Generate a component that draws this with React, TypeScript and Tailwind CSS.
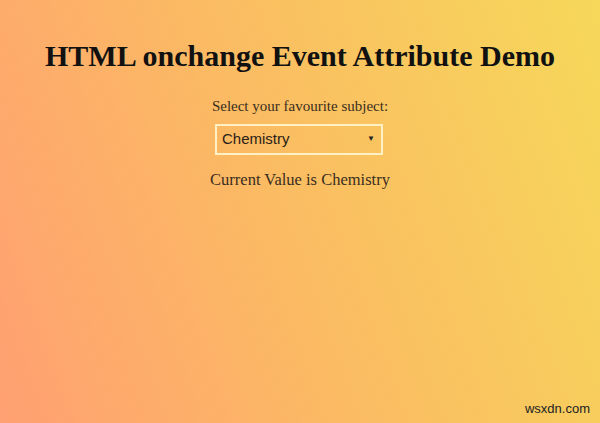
import React, { useState } from 'react';

const subjects = ['Physics', 'Chemistry', 'Mathematics', 'Biology'];

const App: React.FC = () => {
  const [value, setValue] = useState('Chemistry');

  return (
    <div className="relative w-[600px] h-[423px] overflow-hidden bg-[linear-gradient(70deg,#ffa072,#fbba63_45%,#f6d85a)] font-['Liberation_Serif',serif] text-[#2a2118]">
      {/* Heading */}
      <h1 className="pt-[38px] text-center text-[30px] leading-[36px] font-bold text-[#111]">
        HTML onchange Event Attribute Demo
      </h1>

      {/* Form */}
      <div className="flex flex-col items-center">
        <p className="mt-[22px] text-[15px] leading-[20px] text-[#3a2d20]">Select your favourite subject:</p>
        <div className="relative mt-[8px] ml-[-2px] w-[168px] h-[31px] border-2 border-[#fff1c4]">
          <select
            value={value}
            onChange={(e) => setValue(e.target.value)}
            className="w-full h-full appearance-none bg-transparent pl-[5px] font-['Liberation_Sans',sans-serif] text-[15px] text-[#2a2118] outline-none"
          >
            {subjects.map((s) => (
              <option key={s} value={s}>
                {s}
              </option>
            ))}
          </select>
          <span className="pointer-events-none absolute right-[6px] top-[8px] text-[8px] leading-[10px] text-[#222]">▼</span>
        </div>
        <p className="mt-[14px] text-[16.5px] leading-[22px] text-[#3a2d20]">Current Value is {value}</p>
      </div>

      {/* Watermark */}
      <span className="absolute right-[10px] bottom-[5px] font-['Liberation_Sans',sans-serif] text-[13px] text-[#222]">
        wsxdn.com
      </span>
    </div>
  );
};

export default App;
